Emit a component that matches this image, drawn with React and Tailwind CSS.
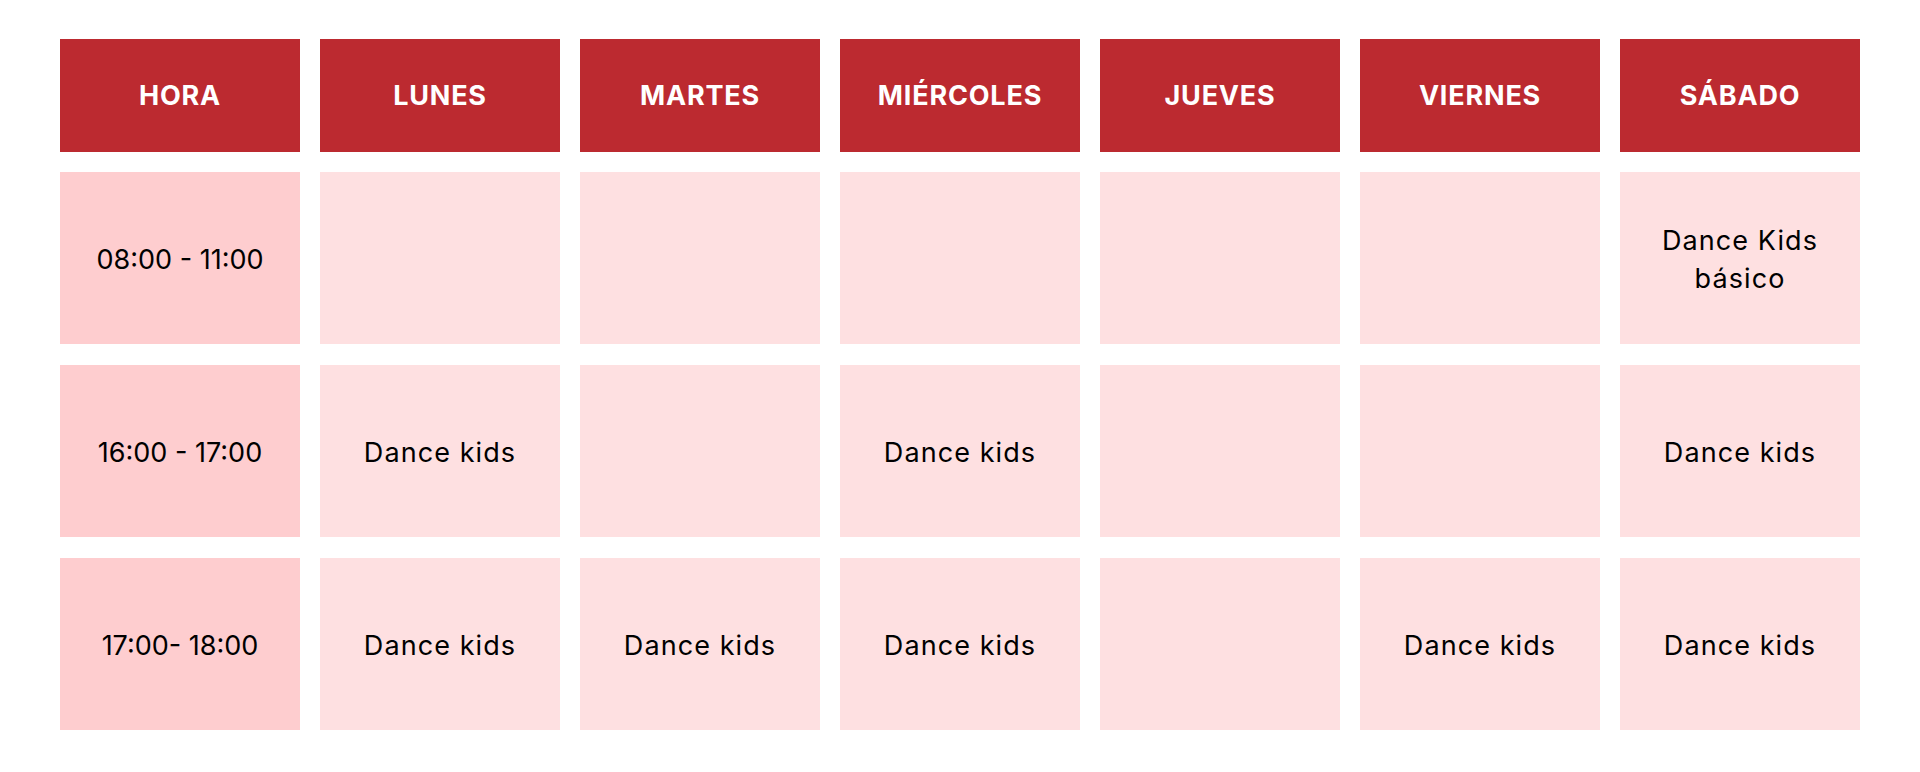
import React from "react";

const days = ["HORA", "LUNES", "MARTES", "MIÉRCOLES", "JUEVES", "VIERNES", "SÁBADO"];

const rows = [
  ["08:00 - 11:00", "", "", "", "", "", "Dance Kids|básico"],
  ["16:00 - 17:00", "Dance kids", "", "Dance kids", "", "", "Dance kids"],
  ["17:00- 18:00", "Dance kids", "Dance kids", "Dance kids", "", "Dance kids", "Dance kids"],
];

export default function App() {
  return (
    <div
      className="w-[1920px] h-[772px] bg-white px-[60px] pt-[39px]"
      style={{ fontFamily: "Inter, 'Noto Sans', sans-serif" }}
    >
      <div className="grid grid-cols-7 gap-x-5">
        {days.map((d) => (
          <div
            key={d}
            className="h-[113px] bg-[#bc2a30] flex items-center justify-center pt-[2px] text-white text-[27px] font-bold tracking-[0.03em]"
          >
            {d}
          </div>
        ))}
      </div>
      <div className="flex flex-col gap-[21px] mt-5">
        {rows.map((r, i) => (
          <div key={i} className="grid grid-cols-7 gap-x-5">
            {r.map((c, j) => (
              <div
                key={j}
                className={
                  j === 0
                    ? "h-[172px] flex items-center justify-center pt-[4px] text-center text-black text-[27px] leading-[38px] tracking-normal whitespace-nowrap bg-[#fecdcf]"
                    : "h-[172px] flex flex-col items-center justify-center pt-[4px] text-center text-black text-[27px] leading-[38px] tracking-[0.04em] whitespace-nowrap bg-[#fee0e1]"
                }
              >
                {c.split("|").map((line, k) => (
                  <span key={k}>{line}</span>
                ))}
              </div>
            ))}
          </div>
        ))}
      </div>
    </div>
  );
}
